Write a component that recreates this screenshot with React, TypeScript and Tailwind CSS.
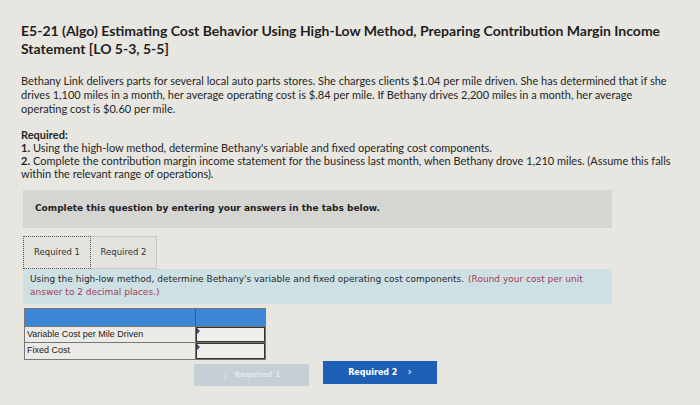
import React from "react";

export default function App() {
  return (
    <div className="w-[700px] h-[405px] overflow-hidden bg-[#e7e6e1] text-[#222]" style={{ fontFamily: "Lato, 'Liberation Sans', sans-serif" }}>
      <div className="pl-[21px] pt-[22px] pr-[18px]">
        <h1 className="text-[14px] font-bold leading-[18px] text-[#1f1f1f]">
          E5-21 (Algo) Estimating Cost Behavior Using High-Low Method, Preparing Contribution Margin Income Statement [LO 5-3, 5-5]
        </h1>

        <p className="mt-[16px] pr-[10px] text-[11px] leading-[14px] text-[#262626]">
          Bethany Link delivers parts for several local auto parts stores. She charges clients $1.04 per mile driven. She has determined that if she drives 1,100 miles in a month, her average operating cost is $.84 per mile. If Bethany drives 2,200 miles in a month, her average operating cost is $0.60 per mile.
        </p>

        <div className="mt-[12px] text-[11px] leading-[13px] text-[#262626]">
          <div className="font-bold">Required:</div>
          <div className="flex gap-[3px]">
            <span className="font-bold">1.</span>
            <span>Using the high-low method, determine Bethany's variable and fixed operating cost components.</span>
          </div>
          <div className="flex gap-[3px]">
            <span className="font-bold">2.</span>
            <span>Complete the contribution margin income statement for the business last month, when Bethany drove 1,210 miles. (Assume this falls</span>
          </div>
          <div>within the relevant range of operations).</div>
        </div>
      </div>

      <div className="ml-[23px] w-[589px]" style={{ fontFamily: "'DejaVu Sans', Verdana, sans-serif" }}>
        <div className="mt-[10px] h-[38px] bg-[#d5d5d2] flex items-center pl-[12px] text-[9px] font-bold text-[#222]">
          Complete this question by entering your answers in the tabs below.
        </div>

        <div className="mt-[8px] flex h-[33px]">
          <div className="w-[68px] flex items-center justify-center border border-dotted border-[#555] bg-[#e3e2dd] text-[8.5px] text-[#333]">
            Required 1
          </div>
          <div className="w-[66px] flex items-center justify-center border border-l-0 border-[#c8c8c4] bg-[#e3e2dd] text-[8.5px] text-[#333]">
            Required 2
          </div>
        </div>

        <div className="h-[35px] bg-[#cde0e4] pl-[7px] pt-[4px] text-[9px] leading-[13px] text-[#2a2a2a]">
          <div className="flex gap-[4px]">
            <span>Using the high-low method, determine Bethany's variable and fixed operating cost components.</span>
            <span className="text-[#a83a55]">(Round your cost per unit</span>
          </div>
          <div className="text-[#a83a55]">answer to 2 decimal places.)</div>
        </div>
      </div>

      <div className="ml-[24px] mt-[4px] w-[242px] border border-[#777]" style={{ fontFamily: "'Liberation Sans', Arial, sans-serif" }}>
        <div className="flex h-[17px] bg-[#3d86d6]">
          <div className="w-[171px] border-r border-[#2a5f9a]" />
          <div className="flex-1" />
        </div>
        <div className="flex h-[16px] border-t border-[#777]">
          <div className="w-[171px] flex items-center pl-[2px] text-[9px] text-[#222] bg-[#ebeae6] border-r border-[#777]">
            Variable Cost per Mile Driven
          </div>
          <div className="flex-1 bg-[#f0efec] border border-[#333] relative">
            <span className="absolute left-0 top-0 w-0 h-0 border-t-[3px] border-b-[3px] border-l-[3px] border-t-transparent border-b-transparent border-l-[#2a4a8a]" />
          </div>
        </div>
        <div className="flex h-[17px] border-t border-[#777]">
          <div className="w-[171px] flex items-center pl-[2px] text-[9px] text-[#222] bg-[#ebeae6] border-r border-[#777]">
            Fixed Cost
          </div>
          <div className="flex-1 bg-[#f0efec] border border-[#333] relative">
            <span className="absolute left-0 top-0 w-0 h-0 border-t-[3px] border-b-[3px] border-l-[3px] border-t-transparent border-b-transparent border-l-[#2a4a8a]" />
          </div>
        </div>
      </div>

      <div className="ml-[194px] mt-[1px] flex items-start gap-[14px]" style={{ fontFamily: "'DejaVu Sans', Verdana, sans-serif" }}>
        <div className="mt-[3px] w-[115px] h-[22px] bg-[#c7cfd6] flex items-center justify-center gap-[8px] text-[7.5px] font-bold text-[#e3e7ea]">
          <span className="text-[10px] font-normal">&lsaquo;</span>
          <span>Required 1</span>
        </div>
        <div className="w-[114px] h-[23px] bg-[#1c5fb5] flex items-center justify-center gap-[10px] text-[8px] font-bold text-white">
          <span>Required 2</span>
          <span className="text-[11px] font-normal">&rsaquo;</span>
        </div>
      </div>
    </div>
  );
}
